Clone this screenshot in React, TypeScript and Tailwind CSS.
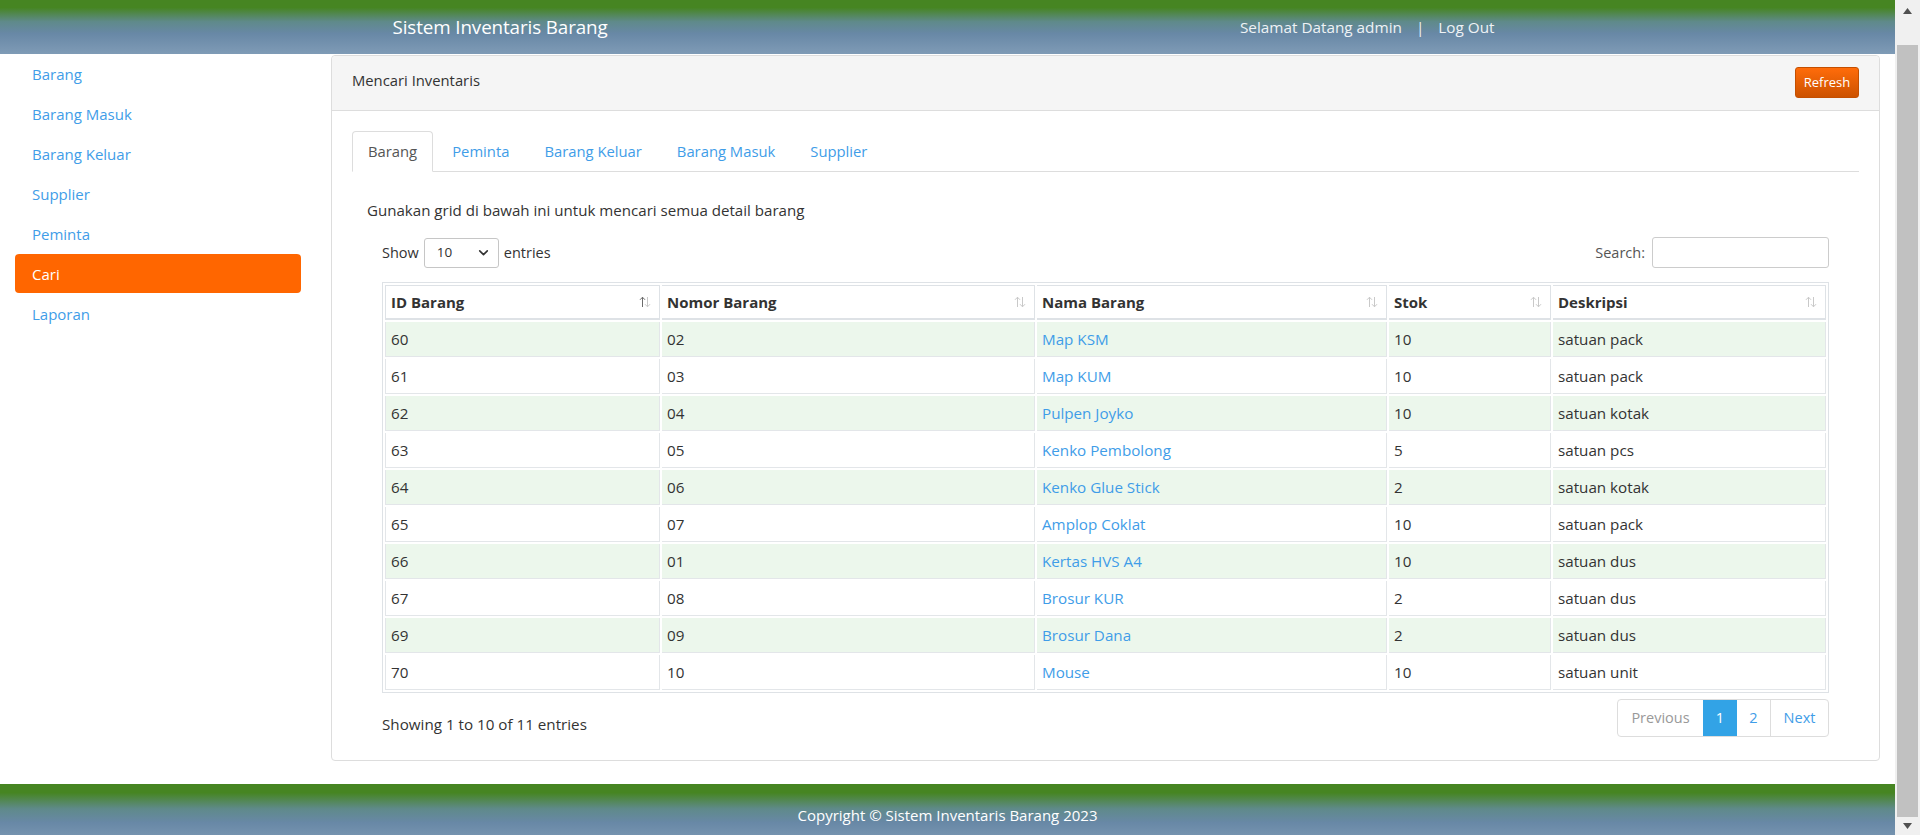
import React from "react";

const rows = [
  ["60", "02", "Map KSM", "10", "satuan pack"],
  ["61", "03", "Map KUM", "10", "satuan pack"],
  ["62", "04", "Pulpen Joyko", "10", "satuan kotak"],
  ["63", "05", "Kenko Pembolong", "5", "satuan pcs"],
  ["64", "06", "Kenko Glue Stick", "2", "satuan kotak"],
  ["65", "07", "Amplop Coklat", "10", "satuan pack"],
  ["66", "01", "Kertas HVS A4", "10", "satuan dus"],
  ["67", "08", "Brosur KUR", "2", "satuan dus"],
  ["69", "09", "Brosur Dana", "2", "satuan dus"],
  ["70", "10", "Mouse", "10", "satuan unit"],
];

const cols = [
  { name: "ID Barang", w: "w-[275px]", sorted: true },
  { name: "Nomor Barang", w: "w-[373px]", sorted: false },
  { name: "Nama Barang", w: "w-[350px]", sorted: false },
  { name: "Stok", w: "w-[162px]", sorted: false },
  { name: "Deskripsi", w: "w-[273px]", sorted: false },
];

function SortIcon({ sorted }: { sorted: boolean }) {
  const up = sorted ? "#6b6b6b" : "#c9c9c9";
  const down = "#c9c9c9";
  return (
    <svg width="12" height="12" viewBox="0 0 12 12" fill="none">
      <path d="M3.5 11V1.2M1 3.8L3.5 1.2L6 3.8" stroke={up} strokeWidth="1" />
      <path d="M8.5 1V10.8M6 8.2L8.5 10.8L11 8.2" stroke={down} strokeWidth="1" />
    </svg>
  );
}

const sidebarItems = ["Barang", "Barang Masuk", "Barang Keluar", "Supplier", "Peminta", "Cari", "Laporan"];
const tabs = ["Barang", "Peminta", "Barang Keluar", "Barang Masuk", "Supplier"];

const gradient =
  "bg-[linear-gradient(to_bottom,#468522_0%,#468522_14%,#5f8a8a_40%,#6888a6_62%,#7f9bb6_100%)]";

export default function App() {
  return (
    <div className="h-[835px] w-[1920px] overflow-hidden flex bg-white font-['Open_Sans',sans-serif] text-[#333]">
      <div className="w-[1895px] flex flex-col shrink-0">
        {/* Header */}
        <header className={`h-[54px] shrink-0 ${gradient}`}>
          <div className="w-[1170px] mx-auto h-full flex items-center justify-between pl-[30px] pr-[38px]">
            <div className="text-white text-[18.8px] tracking-[-0.1px]">Sistem Inventaris Barang</div>
            <div className="flex items-center text-[#eef2f5] text-[15.3px]">
              <span>Selamat Datang admin</span>
              <span className="mx-[14px]">|</span>
              <span>Log Out</span>
            </div>
          </div>
        </header>

        <div className="flex shrink-0">
          {/* Sidebar */}
          <nav className="w-[316px] shrink-0 px-[15px]">
            <ul>
              {sidebarItems.map((it) => (
                <li key={it} className="mb-[1px]">
                  <div
                    className={`h-[39px] flex items-center px-[17px] pt-[2px] rounded-[4px] text-[15px] ${
                      it === "Cari" ? "bg-[#ff6600] text-white" : "text-[#3f9de8]"
                    }`}
                  >
                    {it}
                  </div>
                </li>
              ))}
            </ul>
          </nav>

          {/* Main */}
          <main className="flex-1 px-[15px] pt-[1px]">
            <div className="border border-[#dddddd] rounded-[4px]">
              <div className="h-[55px] bg-[#f5f5f5] border-b border-[#dddddd] rounded-t-[4px] flex items-center justify-between pl-[20px] pr-[20px]">
                <span className="text-[14.8px] text-[#333] -mt-[5px]">Mencari Inventaris</span>
                <button className="h-[31px] w-[64px] rounded-[3px] text-white text-[13px] bg-[linear-gradient(to_bottom,#ff6c0a,#cc5200)] border border-[#c44f00] mt-[-1px]">
                  Refresh
                </button>
              </div>
              <div className="p-[20px] pb-[23px]">
                <ul className="flex h-[41px] border-b border-[#dddddd]">
                  {tabs.map((t, i) => (
                    <li key={t} className="mr-[3px]">
                      <div
                        className={`h-[41px] flex items-center px-[15px] text-[14.8px] rounded-t-[4px] ${
                          i === 0
                            ? "bg-white border border-[#dddddd] border-b-white text-[#555]"
                            : "text-[#3f9de8] border border-transparent"
                        }`}
                      >
                        {t}
                      </div>
                    </li>
                  ))}
                </ul>
                <p className="mt-[28px] pl-[15px] text-[15.1px] leading-[20px] text-[#333]">
                  Gunakan grid di bawah ini untuk mencari semua detail barang
                </p>
                <div className="px-[30px] mt-[17px]">
                  <div className="flex items-center justify-between h-[31px]">
                    <div className="flex items-center text-[14.5px]">
                      <span>Show</span>
                      <div className="ml-[5px] mr-[5px] w-[75px] h-[30px] border border-[#c6c6c6] rounded-[3px] flex items-center justify-between pl-[12px] pr-[8px]">
                        <span className="text-[13.5px]">10</span>
                        <svg width="13" height="13" viewBox="0 0 24 24" fill="none" stroke="#333" strokeWidth="3" strokeLinecap="round" strokeLinejoin="round">
                          <path d="M5 9l7 7 7-7" />
                        </svg>
                      </div>
                      <span>entries</span>
                    </div>
                    <div className="flex items-center text-[14.5px]">
                      <span className="text-[#555]">Search:</span>
                      <div className="ml-[7px] w-[177px] h-[31px] border border-[#cccccc] rounded-[3px]" />
                    </div>
                  </div>

                  <table className="mt-[14px] w-[1447px] table-fixed border-separate border-spacing-[2px] border border-[#dee2e6]">
                    <thead>
                      <tr>
                        {cols.map((c, i) => (
                          <th
                            key={c.name}
                            className={`${c.w} h-[35px] text-left font-bold text-[15px] px-[5px] border-t border-r border-b-2 border-[#dee2e6] ${
                              i === 0 ? "border-l" : ""
                            }`}
                          >
                            <div className="flex items-center justify-between pr-[3px]">
                              <span>{c.name}</span>
                              <SortIcon sorted={c.sorted} />
                            </div>
                          </th>
                        ))}
                      </tr>
                    </thead>
                    <tbody>
                      {rows.map((r, ri) => (
                        <tr key={ri} className={ri % 2 === 0 ? "bg-[#ecf7ec]" : "bg-white"}>
                          {r.map((cell, ci) => (
                            <td
                              key={ci}
                              className={`h-[35px] px-[5px] pt-[1px] text-[15.2px] border-r border-b border-[#e3e6e9] ${
                                ci === 0 ? "border-l" : ""
                              } ${ci === 2 ? "text-[#3f9de8]" : "text-[#333]"}`}
                            >
                              {cell}
                            </td>
                          ))}
                        </tr>
                      ))}
                    </tbody>
                  </table>

                  <div className="flex justify-between items-start">
                    <div className="mt-[21px] text-[15.2px] leading-[20px]">Showing 1 to 10 of 11 entries</div>
                    <div className="mt-[6px] flex h-[38px] border border-[#dddddd] rounded-[4px] text-[14.5px] overflow-hidden">
                      <div className="w-[85px] flex items-center justify-center text-[#999]">Previous</div>
                      <div className="w-[34px] flex items-center justify-center bg-[#32a3e6] text-white">1</div>
                      <div className="w-[34px] flex items-center justify-center text-[#3f9de8] border-r border-[#dddddd]">2</div>
                      <div className="w-[57px] flex items-center justify-center text-[#3f9de8]">Next</div>
                    </div>
                  </div>
                </div>
              </div>
            </div>
          </main>
        </div>

        <footer className={`mt-[23px] h-[62px] shrink-0 flex items-center justify-center text-white text-[15px] ${gradient}`}>
          Copyright © Sistem Inventaris Barang 2023
        </footer>
      </div>

      {/* Fake scrollbar */}
      <div className="w-[25px] h-[835px] bg-[#f0f0f0] flex flex-col items-center shrink-0">
        <div className="h-[22px] w-full flex items-center justify-center">
          <svg width="9" height="6" viewBox="0 0 9 6"><path d="M0 6L4.5 0L9 6Z" fill="#505050" /></svg>
        </div>
        <div className="mt-[23px] w-[21px] h-[772px] bg-[#c1c1c1]" />
        <div className="flex-1 w-full flex items-center justify-center">
          <svg width="9" height="6" viewBox="0 0 9 6"><path d="M0 0L4.5 6L9 0Z" fill="#505050" /></svg>
        </div>
      </div>
    </div>
  );
}
